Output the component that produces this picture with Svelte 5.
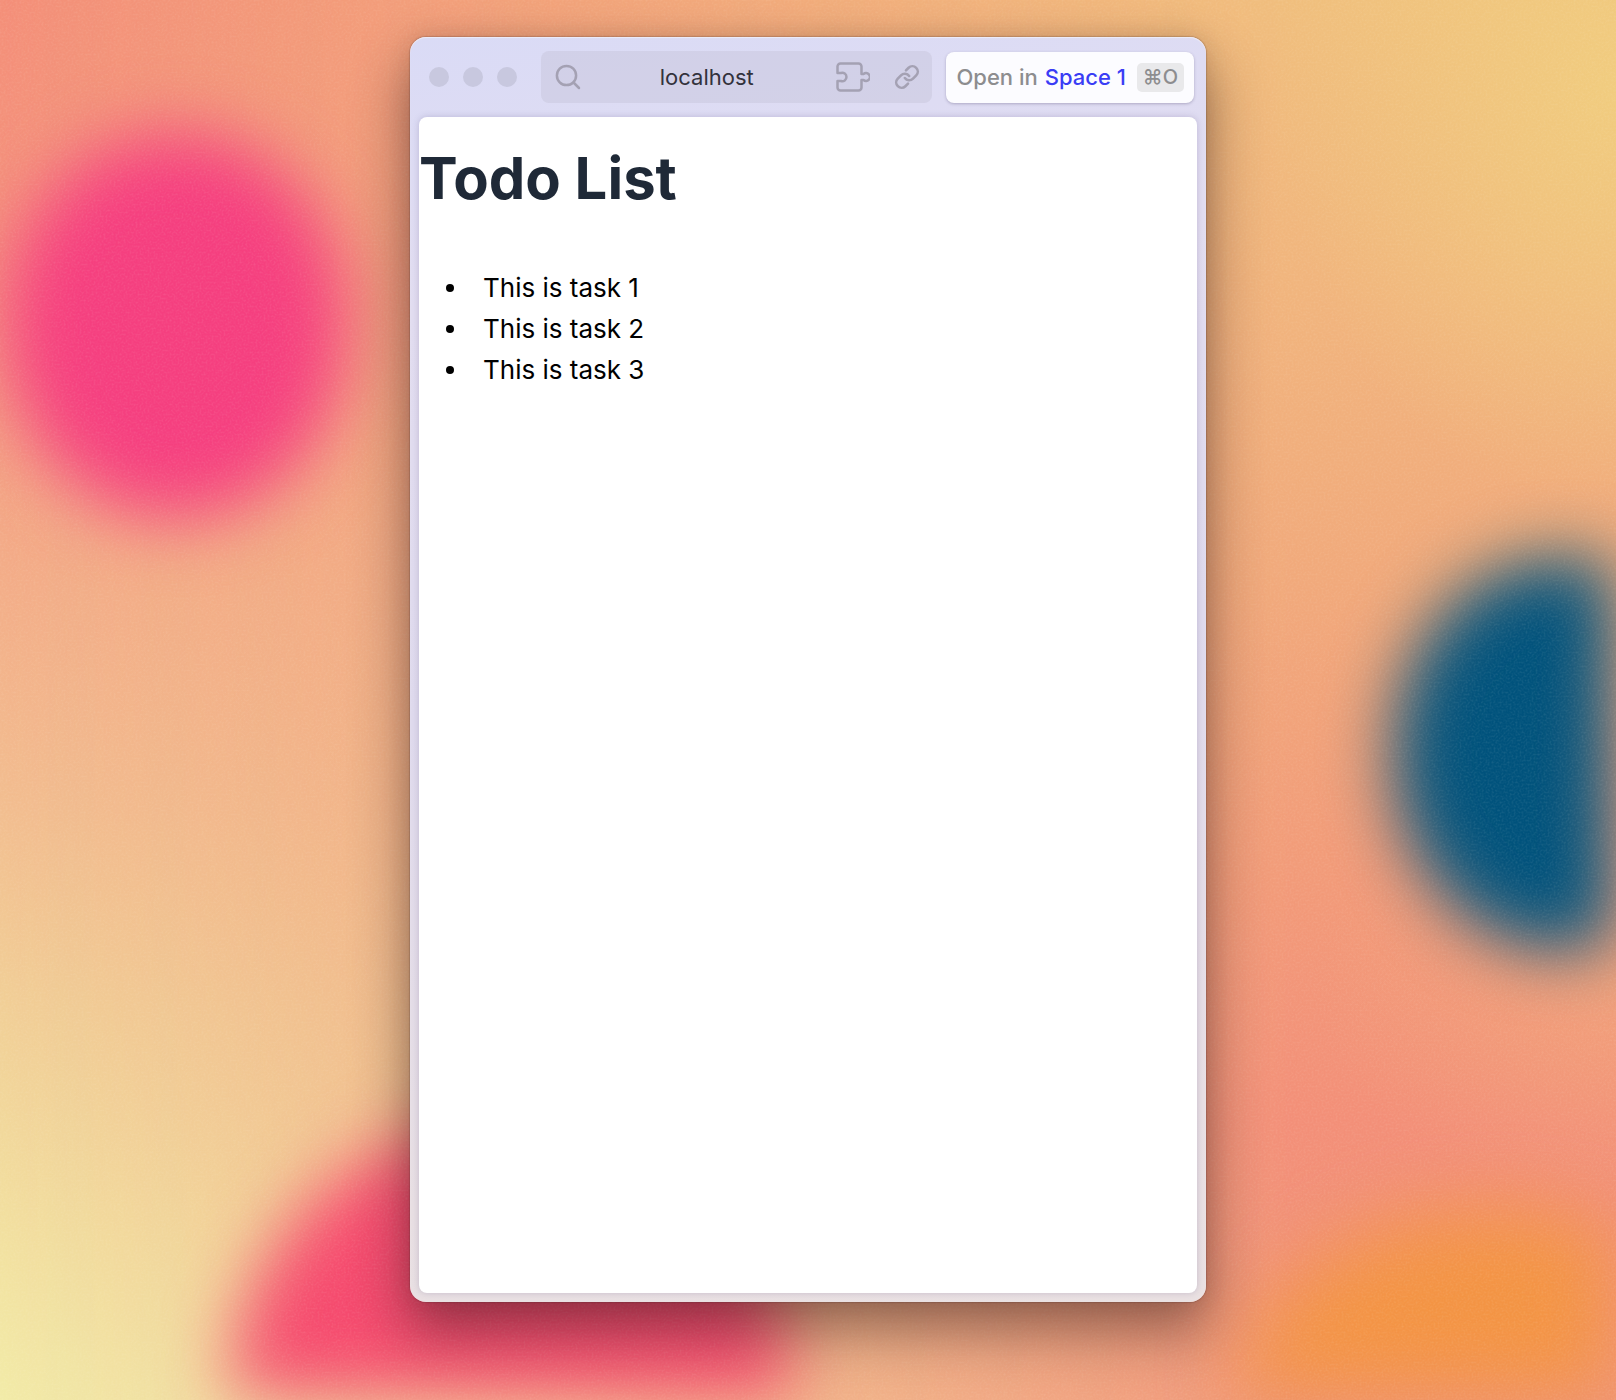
<script>
  const tasks = ['This is task 1', 'This is task 2', 'This is task 3'];
  let address = $state('localhost');
</script>

<div class="desktop">
  <svg class="wallpaper" viewBox="0 0 1616 1400" preserveAspectRatio="none" aria-hidden="true">
    <defs>
      <linearGradient id="left" x1="0" y1="0" x2="0" y2="1">
        <stop offset="0" stop-color="#f48f79" />
        <stop offset="0.2" stop-color="#f4947e" />
        <stop offset="0.42" stop-color="#f3ae89" />
        <stop offset="0.58" stop-color="#f2be90" />
        <stop offset="0.72" stop-color="#f1cf97" />
        <stop offset="0.88" stop-color="#f2e0a0" />
        <stop offset="1" stop-color="#f2eba8" />
      </linearGradient>
      <linearGradient id="right" x1="0" y1="0" x2="0" y2="1">
        <stop offset="0" stop-color="#f0be7d" />
        <stop offset="0.22" stop-color="#f1b47d" />
        <stop offset="0.42" stop-color="#f1a97b" />
        <stop offset="0.62" stop-color="#f29b79" />
        <stop offset="0.8" stop-color="#f38f78" />
        <stop offset="1" stop-color="#f09579" />
      </linearGradient>
      <linearGradient id="across" x1="0" y1="0" x2="1" y2="0">
        <stop offset="0" stop-color="#000" />
        <stop offset="0.8" stop-color="#fff" />
      </linearGradient>
      <mask id="blend"><rect width="1616" height="1400" fill="url(#across)" /></mask>
      <radialGradient id="glow">
        <stop offset="0" stop-color="#f1d07f" stop-opacity="0.8" />
        <stop offset="1" stop-color="#f1d07f" stop-opacity="0" />
      </radialGradient>
      <radialGradient id="haze">
        <stop offset="0" stop-color="#f1a87c" stop-opacity="0.6" />
        <stop offset="1" stop-color="#f1a87c" stop-opacity="0" />
      </radialGradient>
      <filter id="soft" x="-40%" y="-40%" width="180%" height="180%" color-interpolation-filters="sRGB">
        <feGaussianBlur stdDeviation="34" />
      </filter>
      <filter id="softer" x="-40%" y="-40%" width="180%" height="180%" color-interpolation-filters="sRGB">
        <feGaussianBlur stdDeviation="38" />
      </filter>
      <filter id="grain" x="0" y="0" width="100%" height="100%">
        <feTurbulence type="fractalNoise" baseFrequency="0.5" numOctaves="2" />
        <feColorMatrix values="0 0 0 0 1  0 0 0 0 1  0 0 0 0 0.9  0.6 0 0 0 -0.24" />
      </filter>
      <clipPath id="edge"><rect width="1612" height="1394" /></clipPath>
    </defs>
    <rect width="1616" height="1400" fill="url(#left)" />
    <rect width="1616" height="1400" fill="url(#right)" mask="url(#blend)" />
    <ellipse cx="1616" cy="90" rx="340" ry="420" fill="url(#glow)" />
    <ellipse cx="1616" cy="980" rx="300" ry="220" fill="url(#haze)" />
    <g filter="url(#soft)"><ellipse cx="176" cy="326" rx="170" ry="192" fill="#f53f7f" /></g>
    <g filter="url(#soft)"><ellipse cx="1564" cy="754" rx="170" ry="196" fill="#00527c" clip-path="url(#edge)" /></g>
    <g filter="url(#soft)"><ellipse cx="512" cy="1404" rx="282" ry="284" fill="#f54a6e" clip-path="url(#edge)" /></g>
    <g filter="url(#softer)"><ellipse cx="1496" cy="1426" rx="266" ry="214" fill="#f39444" clip-path="url(#edge)" /></g>
    <rect width="1616" height="1400" filter="url(#grain)" opacity="0.3" />
  </svg>

  <main class="window">
    <header class="toolbar">
      <div class="lights">
        <button aria-label="Close"></button>
        <button aria-label="Minimize"></button>
        <button aria-label="Zoom"></button>
      </div>

      <div class="address">
        <svg class="search" viewBox="0 0 26 26" aria-hidden="true">
          <circle cx="11.5" cy="11.5" r="9.6" />
          <path d="M18.5 18.5 24 24" />
        </svg>
        <input type="text" aria-label="Address" bind:value={address} />
        <button class="icon" aria-label="Extensions">
          <svg class="puzzle" viewBox="0 0 34 30" aria-hidden="true">
            <path d="M4.5 1.5H22.5A3 3 0 0 1 25.5 4.5V12H27.5A3.9 3.9 0 1 1 27.5 18H25.5V25.5A3 3 0 0 1 22.5 28.5H4.5A3 3 0 0 1 1.5 25.5V19H5A4.2 4.2 0 1 0 5 11H1.5V4.5A3 3 0 0 1 4.5 1.5Z" />
          </svg>
        </button>
        <button class="icon" aria-label="Copy link">
          <svg class="link" viewBox="0 0 24 24" aria-hidden="true">
            <path d="M10 13a5 5 0 0 0 7.54.54l3-3a5 5 0 0 0-7.07-7.07l-2.4 2.4" />
            <path d="M14 11a5 5 0 0 0-7.54-.54l-3 3a5 5 0 0 0 7.07 7.07l2.4-2.4" />
          </svg>
        </button>
      </div>

      <button class="open">
        <span>Open in</span>
        <strong>Space 1</strong>
        <kbd>⌘O</kbd>
      </button>
    </header>

    <section class="page">
      <h1>Todo List</h1>
      <ul>
        {#each tasks as task}
          <li>{task}</li>
        {/each}
      </ul>
    </section>
  </main>
</div>

<style>
  :global(body) {
    margin: 0;
  }

  .desktop {
    position: relative;
    box-sizing: border-box;
    display: flex;
    justify-content: center;
    min-height: 100vh;
    padding: 37px 16px 98px;
    overflow: hidden;
    font-family: Inter, 'Liberation Sans', sans-serif;
  }

  .wallpaper {
    position: absolute;
    inset: 0;
    width: 100%;
    height: 100%;
  }

  .window {
    position: relative;
    box-sizing: border-box;
    display: flex;
    flex-direction: column;
    width: 100%;
    max-width: 796px;
    padding: 0 9px 9px;
    border-radius: 16px;
    background: linear-gradient(172deg, #dadbf6 0%, #e2ddf0 20%, #dfdaed 50%, #e8dfe3 85%, #eae1e2 100%);
    box-shadow:
      0 0 1px 1px rgba(70, 40, 40, 0.2),
      inset 0 1px 1px rgba(255, 255, 255, 0.5),
      0 28px 56px 2px rgba(40, 20, 20, 0.46),
      0 0 24px rgba(40, 20, 20, 0.1);
  }

  button {
    padding: 0;
    border: 0;
    background: none;
    font: inherit;
    cursor: pointer;
  }

  .toolbar {
    display: flex;
    align-items: center;
    height: 80px;
    padding: 0 3px 0 10px;
  }

  .lights {
    display: flex;
    gap: 14px;
    margin-right: 24px;
  }

  .lights button {
    width: 20px;
    height: 20px;
    border-radius: 50%;
    background: #c8c8df;
  }

  .address {
    box-sizing: border-box;
    display: flex;
    flex: 1;
    align-items: center;
    min-width: 0;
    height: 52px;
    margin-right: 14px;
    padding: 0 12px 0 14px;
    border-radius: 8px;
    background: rgba(196, 193, 215, 0.42);
  }

  .address svg {
    display: block;
    fill: none;
    stroke: #a4a1b3;
    stroke-linecap: round;
    stroke-linejoin: round;
  }

  .search {
    width: 26px;
    height: 26px;
    stroke-width: 2.5;
  }

  .address input {
    flex: 1;
    min-width: 0;
    margin: 0 12px 0 8px;
    padding: 0;
    border: 0;
    outline: 0;
    background: none;
    color: #33323c;
    font: 22px Inter, 'Liberation Sans', sans-serif;
    text-align: center;
  }

  .icon + .icon {
    margin-left: 24px;
  }

  .puzzle {
    width: 34px;
    height: 30px;
    stroke-width: 2.5;
  }

  .link {
    width: 26px;
    height: 26px;
    stroke-width: 2.4;
  }

  .open {
    display: flex;
    align-items: center;
    gap: 7px;
    height: 51px;
    padding: 0 10px;
    border-radius: 8px;
    background: #fcfcff;
    box-shadow: 0 1px 3px rgba(60, 50, 90, 0.3);
    color: #8d8d8f;
    font-size: 22px;
    font-weight: 500;
    white-space: nowrap;
  }

  .open strong {
    color: #3a3df5;
    font-weight: 500;
  }

  .open kbd {
    margin-left: 4px;
    padding: 0 6px;
    border-radius: 5px;
    background: #e9e9eb;
    font: inherit;
    font-size: 20px;
    line-height: 29px;
  }

  .page {
    flex: 1;
    padding-top: 31px;
    border-radius: 8px;
    background: #fff;
    box-shadow: 0 0 6px rgba(90, 80, 130, 0.25);
  }

  h1 {
    margin: 0 0 59px;
    color: #1f2937;
    font-size: 58px;
    font-weight: 700;
    line-height: 60px;
  }

  ul {
    margin: 0;
    padding: 0 0 0 27px;
    list-style: none;
  }

  li {
    display: flex;
    align-items: center;
    gap: 29px;
    color: #000;
    font-size: 26px;
    line-height: 41px;
  }

  li::before {
    width: 8px;
    height: 8px;
    border-radius: 50%;
    background: #000;
    content: '';
  }
</style>
